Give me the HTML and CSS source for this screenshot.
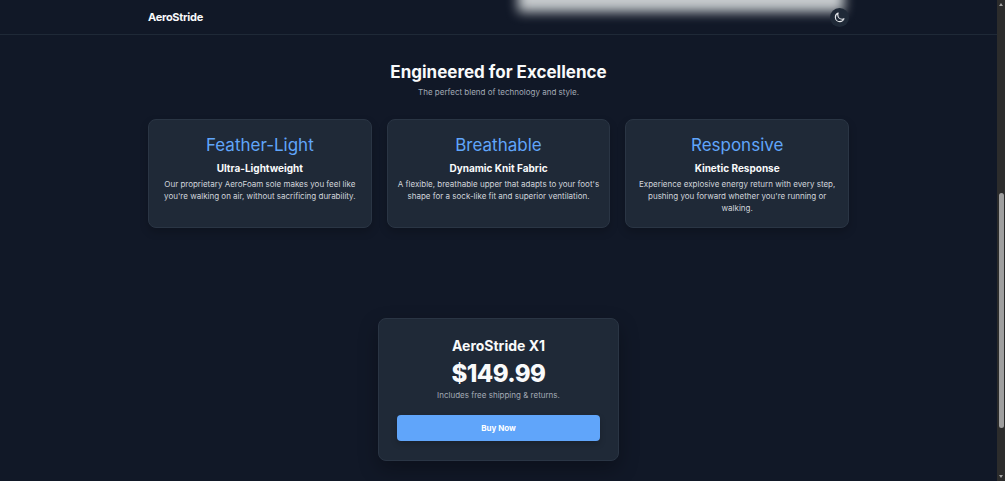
FILE: index.html
```html
<!DOCTYPE html>
<html lang="en">
<head>
<meta charset="utf-8">
<title>AeroStride</title>
<link rel="stylesheet" href="styles.css">
</head>
<body>
<div class="page">
  <header class="header">
    <div class="glow"></div>
    <div class="container header-row">
      <a class="logo" href="#">AeroStride</a>
      <button class="theme" type="button" aria-label="Toggle theme">
        <svg viewBox="0 0 24 24" width="11" height="11" fill="none" stroke="currentColor" stroke-width="2.500" stroke-linecap="round" stroke-linejoin="round"><path d="M21.75 15A9.7 9.7 0 0 1 18 15.75C12.6 15.75 8.25 11.4 8.25 6c0-1.330.26-2.600.75-3.750A9.750 9.750 0 0 0 3 11.250C3 16.630 7.370 21 12.750 21a9.750 9.750 0 0 0 9-6z"/></svg>
      </button>
    </div>
  </header>
  <main>
    <section class="container features">
      <h2 class="heading">Engineered for Excellence</h2>
      <p class="sub">The perfect blend of technology and style.</p>
      <div class="grid">
        <article class="card">
          <div class="word">Feather-Light</div>
          <h3 class="name">Ultra-Lightweight</h3>
          <p class="text">Our proprietary AeroFoam sole makes you feel like you're walking on air, without sacrificing durability.</p>
        </article>
        <article class="card">
          <div class="word">Breathable</div>
          <h3 class="name">Dynamic Knit Fabric</h3>
          <p class="text">A flexible, breathable upper that adapts to your foot's shape for a sock-like fit and superior ventilation.</p>
        </article>
        <article class="card">
          <div class="word">Responsive</div>
          <h3 class="name">Kinetic Response</h3>
          <p class="text">Experience explosive energy return with every step, pushing you forward whether you're running or walking.</p>
        </article>
      </div>
    </section>
    <section class="offer">
      <h2 class="product">AeroStride X1</h2>
      <p class="price">$149.99</p>
      <p class="note">Includes free shipping &amp; returns.</p>
      <button class="buy" type="button">Buy Now</button>
    </section>
  </main>
</div>
<div class="scroll" aria-hidden="true">
  <svg class="arrow" viewBox="0 0 8 8" width="8" height="8"><path d="M4 3 6 6H2z"/></svg>
  <div class="track"><div class="thumb"></div></div>
  <svg class="arrow" viewBox="0 0 8 8" width="8" height="8"><path d="M4 5 6 2H2z"/></svg>
</div>
</body>
</html>
```
FILE: styles.css
```css
* { box-sizing: border-box; }
body {
  margin: 0;
  height: 100vh;
  display: flex;
  overflow: hidden;
  background: #111827;
  color: #f9fafb;
  font-family: Inter, "Liberation Sans", sans-serif;
}
h2, h3, p { margin: 0; }
.page { flex: 1; min-width: 0; overflow: hidden; }
.container { max-width: 701px; margin: 0 auto; }
.header {
  position: relative;
  overflow: hidden;
  border-bottom: 1px solid #1f2937;
}
.glow {
  position: absolute;
  top: -30px;
  left: 52%;
  right: 153px;
  height: 42px;
  background: #c6cacd;
  filter: blur(6px);
}
.header-row {
  position: relative;
  height: 34px;
  display: flex;
  align-items: center;
  justify-content: space-between;
}
.logo {
  font-size: 11px;
  font-weight: 700;
  letter-spacing: -0.025em;
  color: inherit;
  text-decoration: none;
}
.theme {
  width: 19px;
  height: 19px;
  padding: 0;
  display: grid;
  place-items: center;
  border: 0;
  border-radius: 50%;
  background: #1f2937;
  color: #e5e7eb;
}
.features { padding-top: 26px; text-align: center; }
.heading { font-size: 17px; line-height: 22px; font-weight: 700; }
.sub { margin-top: 2px; font-size: 8px; line-height: 14px; color: #a3aab5; }
.grid {
  margin-top: 20px;
  display: grid;
  grid-template-columns: repeat(3, 1fr);
  gap: 15px;
}
.card {
  padding: 14px 8px 13px;
  border: 1px solid #2a3544;
  border-radius: 8px;
  background: #1f2937;
  box-shadow: 0 4px 8px rgba(0, 0, 0, 0.2);
}
.word { font-size: 17px; line-height: 22px; color: #60a5fa; }
.name { margin-top: 6px; font-size: 10px; line-height: 12px; font-weight: 700; }
.text { margin-top: 4px; font-size: 8px; line-height: 12px; color: #d1d5db; }
.offer {
  width: 241px;
  margin: 90px auto 0;
  padding: 18px;
  border: 1px solid #2a3544;
  border-radius: 8px;
  background: #1f2937;
  box-shadow: 0 8px 20px rgba(0, 0, 0, 0.3);
  text-align: center;
}
.product { font-size: 14px; line-height: 18px; font-weight: 700; }
.price {
  margin-top: 6px;
  font-size: 24px;
  line-height: 26px;
  font-weight: 800;
  letter-spacing: -0.025em;
}
.note { margin-top: 2px; font-size: 8px; line-height: 12px; color: #a3aab5; }
.buy {
  width: 100%;
  height: 26px;
  margin: 14px 0 1px;
  padding: 0;
  border: 0;
  border-radius: 4px;
  background: #60a5fa;
  box-shadow: 0 3px 6px rgba(0, 0, 0, 0.2);
  color: #fff;
  font: 700 8px Inter, sans-serif;
}
.scroll {
  width: 8px;
  display: flex;
  flex-direction: column;
  background: #2c2c2c;
}
.arrow { fill: #a3a3a3; }
.track { flex: 1; padding: 185px 1px 0 2px; }
.thumb { height: 235px; border-radius: 3px; background: #9f9f9f; }
```
